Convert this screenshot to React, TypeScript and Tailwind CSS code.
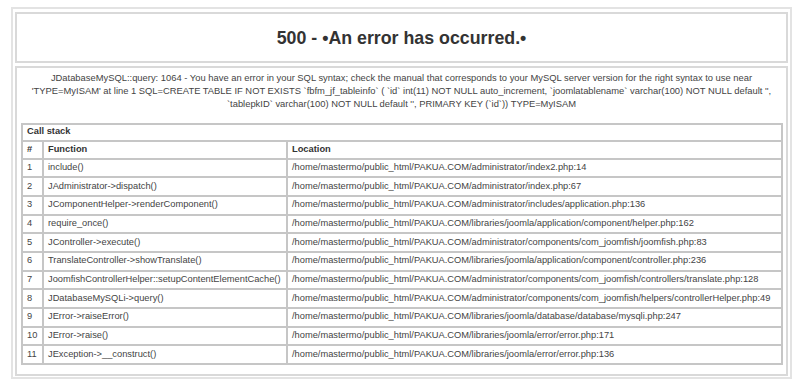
import React from "react";

const rows: [string, string, string][] = [
  ["1", "include()", "/home/mastermo/public_html/PAKUA.COM/administrator/index2.php:14"],
  ["2", "JAdministrator->dispatch()", "/home/mastermo/public_html/PAKUA.COM/administrator/index.php:67"],
  ["3", "JComponentHelper->renderComponent()", "/home/mastermo/public_html/PAKUA.COM/administrator/includes/application.php:136"],
  ["4", "require_once()", "/home/mastermo/public_html/PAKUA.COM/libraries/joomla/application/component/helper.php:162"],
  ["5", "JController->execute()", "/home/mastermo/public_html/PAKUA.COM/administrator/components/com_joomfish/joomfish.php:83"],
  ["6", "TranslateController->showTranslate()", "/home/mastermo/public_html/PAKUA.COM/libraries/joomla/application/component/controller.php:236"],
  ["7", "JoomfishControllerHelper::setupContentElementCache()", "/home/mastermo/public_html/PAKUA.COM/administrator/components/com_joomfish/controllers/translate.php:128"],
  ["8", "JDatabaseMySQLi->query()", "/home/mastermo/public_html/PAKUA.COM/administrator/components/com_joomfish/helpers/controllerHelper.php:49"],
  ["9", "JError->raiseError()", "/home/mastermo/public_html/PAKUA.COM/libraries/joomla/database/database/mysqli.php:247"],
  ["10", "JError->raise()", "/home/mastermo/public_html/PAKUA.COM/libraries/joomla/error/error.php:171"],
  ["11", "JException->__construct()", "/home/mastermo/public_html/PAKUA.COM/libraries/joomla/error/error.php:136"],
];

const cell = "border border-[#c6c6c6] pl-[4px] pr-[2px] py-0 text-left align-middle whitespace-nowrap overflow-hidden";

export default function App() {
  return (
    <div className="w-[800px] h-[386px] bg-white pt-[7px] pl-[11px]" style={{ fontFamily: '"Liberation Sans", Arial, sans-serif' }}>
      <div className="w-[781px] h-[372px] border-2 border-[#e3e3e3] px-[2px] pt-[3px] flex flex-col gap-[3px]">
        <div className="h-[51px] border-2 border-[#d9d9d9] flex items-center justify-center pt-[2px]">
          <h1 className="text-[17.8px] font-bold text-[#333]">500 - •An error has occurred.•</h1>
        </div>
        <div className="h-[310px] border-2 border-[#d9d9d9] px-[3px] pt-[3px]">
          <div className="text-center text-[9.4px] leading-[13px] text-[#444] whitespace-nowrap">
            <div>JDatabaseMySQL::query: 1064 - You have an error in your SQL syntax; check the manual that corresponds to your MySQL server version for the right syntax to use near</div>
            <div>'TYPE=MyISAM' at line 1 SQL=CREATE TABLE IF NOT EXISTS `fbfm_jf_tableinfo` ( `id` int(11) NOT NULL auto_increment, `joomlatablename` varchar(100) NOT NULL default '',</div>
            <div>`tablepkID` varchar(100) NOT NULL default '', PRIMARY KEY (`id`)) TYPE=MyISAM</div>
          </div>
          <table className="mt-[13px] ml-[1px] w-[762px] table-fixed border-separate border-spacing-0 border border-[#c6c6c6] text-[9.3px] text-[#444]">
            <colgroup>
              <col className="w-[21px]" />
              <col className="w-[244px]" />
              <col />
            </colgroup>
            <tbody>
              <tr className="h-[16.6px]">
                <td colSpan={3} className={cell + " font-bold text-[#333]"}>Call stack</td>
              </tr>
              <tr className="h-[18px]">
                <td className={cell + " font-bold text-[#333]"}>#</td>
                <td className={cell + " font-bold text-[#333]"}>Function</td>
                <td className={cell + " font-bold text-[#333]"}>Location</td>
              </tr>
              {rows.map((r) => (
                <tr key={r[0]} className="h-[18.7px]">
                  <td className={cell}>{r[0]}</td>
                  <td className={cell}>{r[1]}</td>
                  <td className={cell}>{r[2]}</td>
                </tr>
              ))}
            </tbody>
          </table>
        </div>
      </div>
    </div>
  );
}
